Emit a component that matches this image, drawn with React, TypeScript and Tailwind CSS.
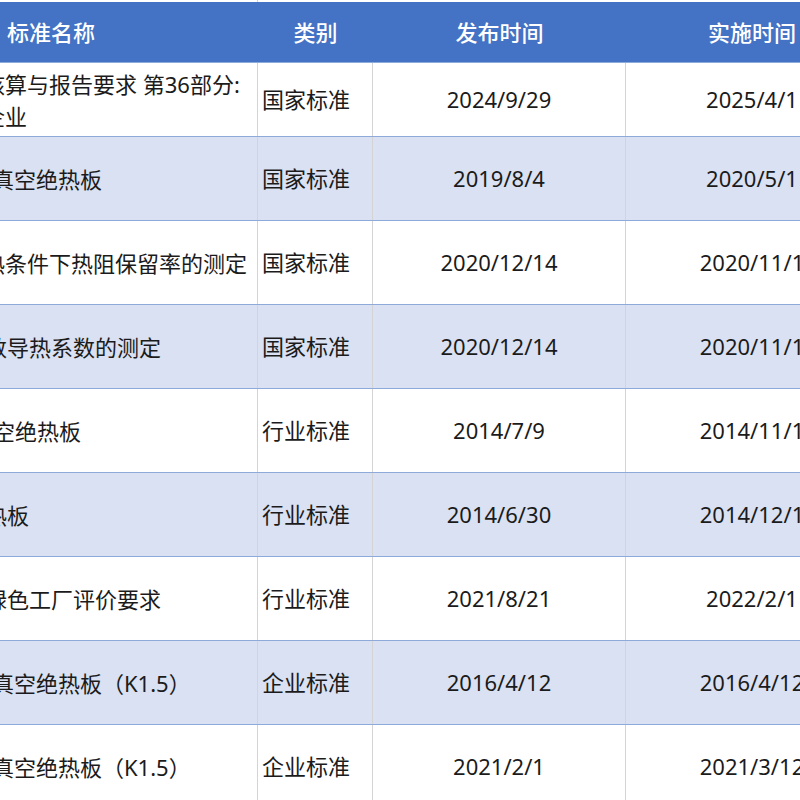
const rows: { name: string[]; off: number[]; type: string; pub: string; imp: string; h: string }[] = [
  { name: ['核算与报告要求 第36部分:', '企业'], off: [-17, -17], type: '国家标准', pub: '2024/9/29', imp: '2025/4/1', h: 'h-[74px]' },
  { name: ['真空绝热板'], off: [-8], type: '国家标准', pub: '2019/8/4', imp: '2020/5/1', h: 'h-[84px]' },
  { name: ['热条件下热阻保留率的测定'], off: [-17], type: '国家标准', pub: '2020/12/14', imp: '2020/11/1', h: 'h-[84px]' },
  { name: ['数导热系数的测定'], off: [-15], type: '国家标准', pub: '2020/12/14', imp: '2020/11/1', h: 'h-[84px]' },
  { name: ['真空绝热板'], off: [-29], type: '行业标准', pub: '2014/7/9', imp: '2014/11/1', h: 'h-[84px]' },
  { name: ['绝热板'], off: [-37], type: '行业标准', pub: '2014/6/30', imp: '2014/12/1', h: 'h-[84px]' },
  { name: ['绿色工厂评价要求'], off: [-15], type: '行业标准', pub: '2021/8/21', imp: '2022/2/1', h: 'h-[84px]' },
  { name: ['真空绝热板（K1.5）'], off: [-8], type: '企业标准', pub: '2016/4/12', imp: '2016/4/12', h: 'h-[84px]' },
  { name: ['真空绝热板（K1.5）'], off: [-8], type: '企业标准', pub: '2021/2/1', imp: '2021/3/12', h: 'h-[84px]' },
];

export default function App() {
  return (
    <div
      className="w-[800px] h-[800px] overflow-hidden bg-white text-[22px] text-[#1b1b1b]"
      style={{ fontFamily: '"Noto Sans", "Noto Sans CJK SC", sans-serif' }}
    >
      <div className="w-[900px]">
        <div className="h-[2px] flex">
          <div className="w-[258px] shrink-0 border-r border-[#d4d4d4]" />
        </div>
        <div className="flex h-[61px] bg-[#4472c4] text-white font-medium border-b border-[#8eaadb]">
          <div className="w-[258px] shrink-0 flex items-center pl-[7px]">标准名称</div>
          <div className="w-[115px] shrink-0 flex items-center justify-center">类别</div>
          <div className="w-[253px] shrink-0 flex items-center justify-center">发布时间</div>
          <div className="w-[252px] shrink-0 flex items-center justify-center">实施时间</div>
        </div>
        {rows.map((r, i) => (
          <div
            key={i}
            className={`flex ${r.h} border-b border-[#8eaadb] ${i % 2 === 1 ? 'bg-[#d9e1f2]' : 'bg-white'}`}
          >
            <div className="w-[258px] shrink-0 overflow-hidden flex flex-col justify-center border-r border-[#d4d4d4] leading-[32px]">
              {r.name.map((n, j) => (
                <div key={j} className="whitespace-nowrap" style={{ marginLeft: r.off[j] }}>
                  {n}
                </div>
              ))}
            </div>
            <div className="w-[115px] shrink-0 flex items-center pl-[4px] border-r border-[#d4d4d4]">{r.type}</div>
            <div className="w-[253px] shrink-0 flex items-center justify-center border-r border-[#d4d4d4]">{r.pub}</div>
            <div className="w-[252px] shrink-0 flex items-center justify-center">{r.imp}</div>
          </div>
        ))}
      </div>
    </div>
  );
}
